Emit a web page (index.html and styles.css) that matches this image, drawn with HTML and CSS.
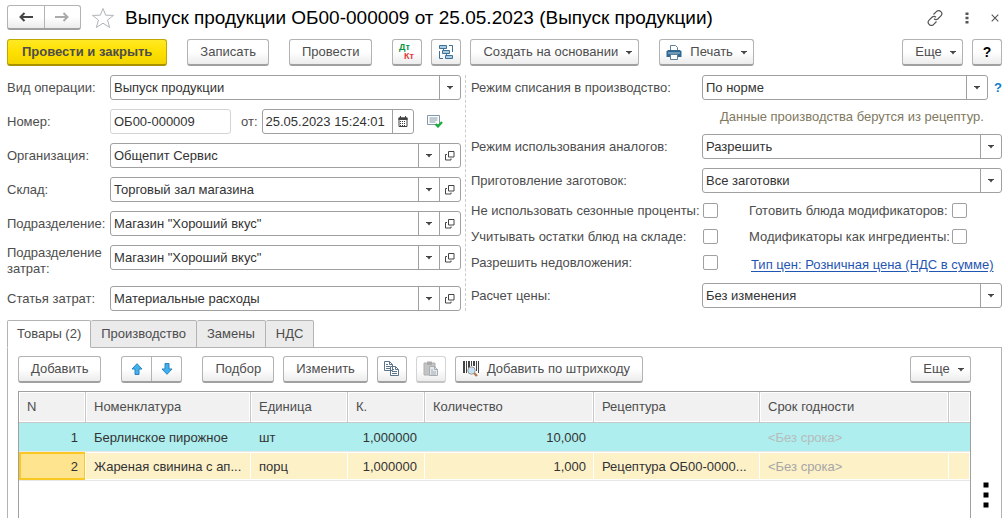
FILE: index.html
```html
<!DOCTYPE html>
<html lang="ru">
<head>
<meta charset="utf-8">
<title>Выпуск продукции</title>
<link rel="stylesheet" href="styles.css">
</head>
<body>
<svg class="defs" aria-hidden="true">
  <symbol id="caret" viewBox="0 0 6 4"><path d="M0 0h6v1H5L3 3.500 1 1H0z" fill="#444"/></symbol>
  <symbol id="open" viewBox="0 0 10 10"><path d="M3.500.5h5.500v5.500H3.500zM2 3.500H.5v5.500H6V7.500" fill="none" stroke="#444"/></symbol>
  <symbol id="sheet" viewBox="0 0 16 16"><path d="M.5.5h5l3 3v6h-8zM6.500 5.500h5l3 3v6h-8z" fill="#fff" stroke="currentColor"/><path d="M5.500.5v3h3M11.500 5.500v3h3M2 3.500h2M2 5.500h4M2 7.500h4M8 8.500h2M8 10.500h5M8 12.500h5" fill="none" stroke="currentColor"/></symbol>
</svg>

<header class="titlebar">
  <div class="pair nav">
    <button type="button" aria-label="Назад"><svg width="14" height="10" viewBox="0 0 14 10"><path d="M5.500 1 1.500 5l4 4M2 5h12" fill="none" stroke="#444" stroke-width="2"/></svg></button>
    <button type="button" aria-label="Вперед"><svg width="14" height="10" viewBox="0 0 14 10"><path d="M8.500 1l4 4-4 4M12 5H0" fill="none" stroke="#aaa" stroke-width="2"/></svg></button>
  </div>
  <button type="button" class="bare" aria-label="В избранное"><svg width="24" height="22" viewBox="0 0 24 22"><path d="M12 1.500l2.700 6.700 7.800.2-6 4.700 2.200 7.400-6.700-4.300-6.700 4.300 2.200-7.400-6-4.700 7.800-.2z" fill="#fff" stroke="#b0b5bb"/></svg></button>
  <h1>Выпуск продукции ОБ00-000009 от 25.05.2023 (Выпуск продукции)</h1>
  <div class="window-tools">
    <button type="button" class="bare" aria-label="Ссылка"><svg width="16" height="16" viewBox="0 0 16 16"><path d="M6.500 4.500l2.800-2.800a2.900 2.900 0 0 1 4.600 0 2.900 2.900 0 0 1 0 4.100L11 8.700a2.900 2.900 0 0 1-4 0M9.500 11.500l-2.800 2.800a2.900 2.900 0 0 1-4.600 0 2.900 2.900 0 0 1 0-4.100L5 7.300a2.900 2.900 0 0 1 4 0" fill="none" stroke="#555" stroke-width="1.200"/></svg></button>
    <button type="button" class="bare" aria-label="Действия"><svg width="4" height="12" viewBox="0 0 4 12"><path d="M.5.500h3v2.500h-3zM.5 4.700h3v2.500h-3zM.5 9h3v2.500h-3z" fill="#555"/></svg></button>
    <button type="button" class="bare" aria-label="Закрыть"><svg width="8" height="8" viewBox="0 0 8 8"><path d="M.7.700l6.600 6.600M7.300.700L.7 7.300" stroke="#555" stroke-width="1.100"/></svg></button>
  </div>
</header>

<div class="toolbar">
  <button type="button" class="btn primary">Провести и закрыть</button>
  <button type="button" class="btn">Записать</button>
  <button type="button" class="btn">Провести</button>
  <div class="group">
    <button type="button" class="btn square" aria-label="Дт Кт"><svg width="18" height="18" viewBox="0 0 18 18"><text x="1" y="7" class="mark debit">Дт</text><text x="6" y="16" class="mark credit">Кт</text></svg></button>
    <button type="button" class="btn square" aria-label="Структура подчиненности"><svg width="16" height="16" viewBox="0 0 16 16" fill="#a9cbe3" stroke="#3d7197"><path d="M1.500 1.500h7v3h-7zM4.500 6.500h7v3h-7zM7.500 11.500h7v3h-7z"/><path d="M11 1.500h3.500V8M1.500 7v7.500H5M5.500 5v1.500M8.500 10v1.500" fill="none"/></svg></button>
    <button type="button" class="btn">Создать на основании<svg class="caret"><use href="#caret"/></svg></button>
  </div>
  <button type="button" class="btn print"><svg width="16" height="15" viewBox="0 0 16 15"><path d="M4.500 6V.5h5l2 2V6" fill="#fff" stroke="#5c7f9c"/><path d="M2 5h12l1.500 1.500V12h-15V6.500z" fill="#31688f"/><path d="M2 8h12" stroke="#a9cbe3"/><path d="M4.500 9.500h7v5h-7z" fill="#fff" stroke="#5c7f9c"/></svg>Печать<svg class="caret"><use href="#caret"/></svg></button>
  <div class="group end">
    <button type="button" class="btn more">Еще<svg class="caret"><use href="#caret"/></svg></button>
    <button type="button" class="btn square help" aria-label="Справка">?</button>
  </div>
</div>

<main>
<form class="form">
  <div class="fields left">
    <label for="operation">Вид операции:</label>
    <div class="combo"><select id="operation"><option>Выпуск продукции</option></select><span><svg class="caret"><use href="#caret"/></svg></span></div>

    <label for="number">Номер:</label>
    <div class="number-row">
      <input id="number" class="number" value="ОБ00-000009" readonly>
      <label for="date">от:</label>
      <div class="field date"><input id="date" value="25.05.2023 15:24:01"><button type="button" aria-label="Календарь"><svg width="10" height="11" viewBox="0 0 10 11"><path d="M1 2h8v8.500H1z" fill="#fff" stroke="#444"/><path d="M.5 1.500h9V4h-9zM2 0h1v2H2zM7 0h1v2H7z" fill="#444"/><path d="M2 5.500h6M2 7.500h6M2 9.500h6" stroke="#444" stroke-dasharray="1 1"/></svg></button></div>
      <svg class="posted" width="16" height="13" viewBox="0 0 16 13"><path d="M.5.500h12v9H.5z" fill="#fff" stroke="#8297a8"/><path d="M2.500 3h8M2.500 5h8M2.500 7h6" stroke="#8297a8"/><path d="M8.500 9l2.500 2.500L15 7" fill="none" stroke="#1faa3c" stroke-width="2.200"/></svg>
    </div>

    <label for="org">Организация:</label>
    <div class="field"><input id="org" value="Общепит Сервис"><button type="button" aria-label="Выбрать"><svg class="caret"><use href="#caret"/></svg></button><button type="button" aria-label="Открыть"><svg class="open"><use href="#open"/></svg></button></div>

    <label for="store">Склад:</label>
    <div class="field"><input id="store" value="Торговый зал магазина"><button type="button" aria-label="Выбрать"><svg class="caret"><use href="#caret"/></svg></button><button type="button" aria-label="Открыть"><svg class="open"><use href="#open"/></svg></button></div>

    <label for="dept">Подразделение:</label>
    <div class="field"><input id="dept" value="Магазин &quot;Хороший вкус&quot;"><button type="button" aria-label="Выбрать"><svg class="caret"><use href="#caret"/></svg></button><button type="button" aria-label="Открыть"><svg class="open"><use href="#open"/></svg></button></div>

    <label for="cost-dept">Подразделение<br>затрат:</label>
    <div class="field"><input id="cost-dept" value="Магазин &quot;Хороший вкус&quot;"><button type="button" aria-label="Выбрать"><svg class="caret"><use href="#caret"/></svg></button><button type="button" aria-label="Открыть"><svg class="open"><use href="#open"/></svg></button></div>

    <label for="cost-item">Статья затрат:</label>
    <div class="field"><input id="cost-item" value="Материальные расходы"><button type="button" aria-label="Выбрать"><svg class="caret"><use href="#caret"/></svg></button><button type="button" aria-label="Открыть"><svg class="open"><use href="#open"/></svg></button></div>
  </div>

  <div class="fields right">
    <label for="writeoff">Режим списания в производство:</label>
    <div class="with-help">
      <div class="combo"><select id="writeoff"><option>По норме</option></select><span><svg class="caret"><use href="#caret"/></svg></span></div>
      <button type="button" class="bare hint-mark" aria-label="Подсказка">?</button>
    </div>
    <p class="note">Данные производства берутся из рецептур.</p>

    <label for="analogs">Режим использования аналогов:</label>
    <div class="combo"><select id="analogs"><option>Разрешить</option></select><span><svg class="caret"><use href="#caret"/></svg></span></div>

    <label for="prep">Приготовление заготовок:</label>
    <div class="combo"><select id="prep"><option>Все заготовки</option></select><span><svg class="caret"><use href="#caret"/></svg></span></div>

    <div class="checks">
      <label for="season">Не использовать сезонные проценты:</label><input type="checkbox" id="season">
      <label for="mods">Готовить блюда модификаторов:</label><input type="checkbox" id="mods">
      <label for="stock">Учитывать остатки блюд на складе:</label><input type="checkbox" id="stock">
      <label for="ingr">Модификаторы как ингредиенты:</label><input type="checkbox" id="ingr">
      <label for="short">Разрешить недовложения:</label><input type="checkbox" id="short">
      <a href="#prices">Тип цен: Розничная цена (НДС в сумме)</a>
    </div>

    <label for="price">Расчет цены:</label>
    <div class="combo"><select id="price"><option>Без изменения</option></select><span><svg class="caret"><use href="#caret"/></svg></span></div>
  </div>
</form>

<div class="tabs" role="tablist">
  <button type="button" role="tab" aria-selected="true">Товары (2)</button>
  <button type="button" role="tab" aria-selected="false">Производство</button>
  <button type="button" role="tab" aria-selected="false">Замены</button>
  <button type="button" role="tab" aria-selected="false">НДС</button>
</div>

<section class="panel">
  <div class="content">
    <div class="toolbar">
      <button type="button" class="btn">Добавить</button>
      <div class="pair">
        <button type="button" aria-label="Вверх"><svg width="12" height="12" viewBox="0 0 12 12"><path d="M6 .7l5 5.300H8v5.500H4V6H1z" fill="#41b1ee" stroke="#2b83bd"/></svg></button>
        <button type="button" aria-label="Вниз"><svg width="12" height="12" viewBox="0 0 12 12"><path d="M6 11.300L1 6h3V.5h4V6h3z" fill="#41b1ee" stroke="#2b83bd"/></svg></button>
      </div>
      <div class="group">
        <button type="button" class="btn">Подбор</button>
        <button type="button" class="btn">Изменить</button>
        <button type="button" class="btn square copy" aria-label="Копировать"><svg width="16" height="16"><use href="#sheet"/></svg></button>
        <button type="button" class="btn square" aria-label="Вставить" disabled><svg width="16" height="16" viewBox="0 0 16 16"><path d="M1 2h11v12H1z" fill="#c4c4c4" stroke="#b0b0b0"/><path d="M4 .5h5V4H4z" fill="#aaa"/><path d="M6.500 5.500h5l3 3v6h-8z" fill="#e5e9ec" stroke="#a5adb4"/><path d="M11.500 5.500v3h3M8 9h2M8 11h5M8 13h5" fill="none" stroke="#a5adb4"/></svg></button>
        <button type="button" class="btn barcode"><svg width="16" height="16" viewBox="0 0 16 16"><path d="M0 0h2v12H0zM3 0h1v12H3zM5 0h2v7H5zM8 0h1v5H8zM10 0h2v5h-2zM13 0h1v10h-1zM15 0h1v12h-1z" fill="#444"/><path d="M11 12l3 3" stroke="#b67650" stroke-width="2.400"/><circle cx="8.500" cy="9.500" r="3.700" fill="#c4e2f7" stroke="#a59588"/></svg>Добавить по штрихкоду</button>
      </div>
      <div class="group end">
        <button type="button" class="btn more">Еще<svg class="caret"><use href="#caret"/></svg></button>
      </div>
    </div>
    <div class="grid">
      <table>
        <colgroup><col class="c-n"><col class="c-name"><col class="c-unit"><col class="c-k"><col class="c-qty"><col class="c-recipe"><col class="c-term"><col class="c-rest"></colgroup>
        <thead><tr><th>N</th><th>Номенклатура</th><th>Единица</th><th>К.</th><th>Количество</th><th>Рецептура</th><th>Срок годности</th><th></th></tr></thead>
        <tbody>
          <tr class="marked"><td class="num">1</td><td>Берлинское пирожное</td><td>шт</td><td class="num">1,000000</td><td class="num">10,000</td><td></td><td class="empty">&lt;Без срока&gt;</td><td></td></tr>
          <tr class="selected"><td class="num current">2</td><td>Жареная свинина с ап...</td><td>порц</td><td class="num">1,000000</td><td class="num">1,000</td><td>Рецептура ОБ00-0000...</td><td class="empty">&lt;Без срока&gt;</td><td></td></tr>
        </tbody>
      </table>
    </div>
  </div>
  <div class="side"><button type="button" class="bare" aria-label="Дополнительно"><svg width="6" height="26" viewBox="0 0 6 26"><path d="M.5.500h5v5h-5zM.5 10.500h5v5h-5zM.5 20.500h5v5h-5z"/></svg></button></div>
</section>
</main>
</body>
</html>
```
FILE: styles.css
```css
* { box-sizing: border-box; }

body {
  margin: 0;
  min-height: 100vh;
  padding: 5px 5px 0 7px;
  display: flex;
  flex-direction: column;
  background: #fff;
  color: #4d4d4d;
  font: 13px/16px "Liberation Sans", Arial, sans-serif;
}

button, input, select { font: inherit; color: inherit; }
button { margin: 0; padding: 0; }
svg { display: block; flex: none; }
.defs { position: absolute; width: 0; height: 0; }
.caret { width: 6px; height: 4px; }
.open { width: 10px; height: 10px; }
.bare { border: 0; background: none; }

/* Title */
.titlebar { display: flex; align-items: center; height: 25px; gap: 10px; }
h1 { margin: 0; flex: 1; color: #000; font-size: 19px; line-height: 24px; font-weight: 400; white-space: nowrap; }
.window-tools { display: flex; align-items: center; gap: 22px; padding-right: 3px; }

/* Buttons */
.toolbar { display: flex; gap: 20px; margin-top: 9px; }
.group { display: flex; gap: 9px; }
.end { margin-left: auto; }
.btn, .pair {
  height: 27px;
  border: 1px solid #b3b3b3;
  border-bottom: 2px solid #a0a0a0;
  border-radius: 3px;
  background: linear-gradient(#fff 50%, #ececec);
}
.btn { display: flex; align-items: center; justify-content: center; gap: 8px; padding: 0 12px; white-space: nowrap; }
.btn .caret { margin: 2px -6px 0 0; }
.square { width: 30px; padding: 0; }
.primary { padding: 0 14px; border-color: #c0a800; border-bottom-color: #a89200; background: linear-gradient(#ffe924, #ffe000 50%, #f2d400); font-weight: 700; }
.print { padding-left: 6px; }
.barcode { padding-left: 7px; }
.more { min-width: 61px; }
.help { color: #000; font-weight: 700; font-size: 14px; }
.copy { color: #5d7388; }
.btn:disabled { border-color: #d4d4d4; border-bottom-color: #c4c4c4; }
.mark { font-size: 9px; font-weight: 700; }
.debit { fill: #0b9444; }
.credit { fill: #e0383c; }
.pair { display: flex; width: 61px; }
.pair button { flex: 1; display: flex; align-items: center; justify-content: center; border: 0; background: none; }
.pair button + button { border-left: 1px solid #b3b3b3; }
.nav { width: 74px; height: 25px; }

/* Form */
main { flex: 1; display: flex; flex-direction: column; margin-top: 9px; }
.form { display: grid; grid-template-columns: 458fr 537fr; }
.fields { display: grid; align-items: start; align-content: start; gap: 9px 0; }
.fields > label { padding-top: 5px; white-space: nowrap; }
.left { grid-template-columns: 103px minmax(0, 1fr); padding-right: 4px; }
.left > label[for="cost-dept"] { padding-top: 0; }
.right { grid-template-columns: 231px minmax(0, 1fr); padding-left: 5px; border-left: 1px dashed #ccc; }

.field, .combo, .number {
  height: 25px;
  border: 1px solid #a0a0a0;
  border-radius: 3px;
  background: #fff;
  color: #333;
}
.field { display: flex; }
.field input { flex: 1; min-width: 0; padding: 0 3px; border: 0; background: none; }
.field button { width: 21px; display: flex; align-items: center; justify-content: center; border: 0; border-left: 1px solid #a0a0a0; background: none; }
.combo { display: grid; grid-template: "box" 100% / 100%; }
.combo select { grid-area: box; appearance: none; padding: 0 24px 0 3px; border: 0; background: none; }
.combo span { grid-area: box; justify-self: end; width: 21px; display: flex; align-items: center; justify-content: center; border-left: 1px solid #a0a0a0; pointer-events: none; }
.number-row { display: flex; align-items: center; }
.number { width: 121px; padding: 0 3px; border-color: #d4d4d4; }
.number-row label { padding: 0 4px 0 10px; }
.date { width: 152px; }
.posted { margin-left: 13px; }

.with-help { display: flex; align-items: center; gap: 6px; }
.with-help .combo { flex: 1; }
.hint-mark { color: #0f7bc8; font-weight: 700; }
.note { grid-column: 2; margin: 0; padding-left: 18px; color: #7f7960; white-space: nowrap; }

.checks { grid-column: 1 / -1; display: grid; grid-template-columns: 232px 46px 203px 1fr; grid-auto-rows: 16px; row-gap: 10px; align-items: start; padding: 1px 0 3px; white-space: nowrap; }
.checks input { appearance: none; width: 15px; height: 15px; margin: 0; border: 1px solid #a0a0a0; border-radius: 2px; background: #fff; }
.checks a { grid-column: 3 / -1; padding: 2px 0 0 2px; color: #1f56b3; text-underline-offset: 2px; }

/* Tabs */
.tabs { display: flex; margin-top: 9px; }
.tabs button { position: relative; z-index: 1; height: 28px; padding: 0 10px; border: 1px solid #b3b3b3; border-left: 0; border-radius: 2px 2px 0 0; background: #ebebeb; }
.tabs button[aria-selected="true"] { padding: 0 9px; border-left: 1px solid #b3b3b3; border-bottom-color: #fff; background: #fff; }

.panel { flex: 1; display: grid; grid-template-columns: minmax(0, 1fr) 30px; margin-top: -1px; padding-left: 10px; border: 1px solid #b3b3b3; border-bottom: 0; }
.content { display: flex; flex-direction: column; }
.panel .toolbar { margin-top: 8px; }
.grid { flex: 1; margin-top: 8px; border: 1px solid #a0a0a0; border-bottom: 0; }
.side { display: flex; align-items: flex-end; justify-content: center; padding-bottom: 10px; }

table { width: 100%; table-layout: fixed; border-collapse: separate; border-spacing: 0; }
.c-n { width: 67px; }
.c-name { width: 165px; }
.c-unit { width: 97px; }
.c-k { width: 77px; }
.c-qty { width: 169px; }
.c-recipe { width: 166px; }
.c-term { width: 189px; }
.c-rest { width: 21px; }
th, td { padding: 0 4px 0 8px; overflow: hidden; text-overflow: ellipsis; white-space: nowrap; text-align: left; font-weight: 400; }
th { height: 31px; border-right: 1px solid #c8c8c8; border-bottom: 1px solid #c8c8c8; background: #f1f1f1; box-shadow: inset 0 0 0 1px #fff; }
th:last-child { border-right: 0; }
td { height: 29px; padding-top: 2px; border-bottom: 1px solid #e8e8e8; color: #333; }
.marked td { background: #afeeee; }
.selected td { background: #fdf1c8; box-shadow: inset -1px 0 #fff, inset 0 1px #fff, inset 0 -1px #fff; }
.selected .current { background: #fee48f; box-shadow: inset -1px 0 #fff, inset 0 0 0 2px #f9c822; }
td.num { padding-right: 8px; text-align: right; }
td.empty { color: #a6a6a6; }
.marked td.empty { color: #b5bcbc; }
```
